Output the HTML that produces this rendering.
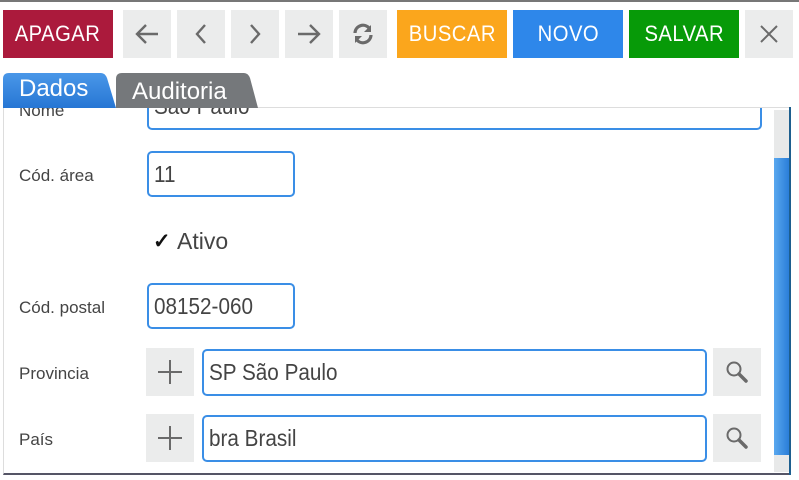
<!DOCTYPE html>
<html><head><meta charset="utf-8">
<style>
*{box-sizing:border-box;margin:0;padding:0}
body{width:799px;height:480px;overflow:hidden;background:#fff;font-family:"Liberation Sans",sans-serif;position:relative}
.a{position:absolute}
.topline{left:0;top:0;width:799px;height:2px;background:#777}
.btn{position:absolute;top:10px;height:48px;color:#fff;font-size:22px;display:flex;align-items:center;justify-content:center;letter-spacing:0.5px;font-weight:normal}
.btn span{display:inline-block;transform:scaleX(0.92)}
.g{background:#ebecec;width:48px}
.tab{position:absolute;top:73px;height:35px;color:#fff;font-size:24px;padding-left:16px;padding-top:5px}
.lbl{position:absolute;left:19px;color:#444;font-size:17px}
.inp{position:absolute;border:2px solid #3a8ee6;border-radius:5px;background:#fff;font-size:23px;color:#444;padding-left:5px;display:flex;align-items:center}
.inp span{display:inline-block;transform:scaleX(0.9);transform-origin:left}
.sq{position:absolute;width:48px;height:48px;background:#ebecec;display:flex;align-items:center;justify-content:center}
</style></head><body>
<div class="a topline"></div>

<div class="btn" style="left:3px;width:110px;background:#ab1a3c"><span>APAGAR</span></div>
<div class="btn g" style="left:123px"><svg width="26" height="22" viewBox="0 0 26 22"><path d="M24 11H3M12 2L3 11L12 20" fill="none" stroke="#6a6a6a" stroke-width="2.4"/></svg></div>
<div class="btn g" style="left:177px"><svg width="14" height="22" viewBox="0 0 14 22"><path d="M11 2L3 11L11 20" fill="none" stroke="#6a6a6a" stroke-width="2.4"/></svg></div>
<div class="btn g" style="left:231px"><svg width="14" height="22" viewBox="0 0 14 22"><path d="M3 2L11 11L3 20" fill="none" stroke="#6a6a6a" stroke-width="2.4"/></svg></div>
<div class="btn g" style="left:285px"><svg width="26" height="22" viewBox="0 0 26 22"><path d="M2 11H23M14 2L23 11L14 20" fill="none" stroke="#6a6a6a" stroke-width="2.4"/></svg></div>
<div class="btn g" style="left:339px"><svg width="24" height="24" viewBox="0 0 24 24"><path d="M4 11A8 8 0 0 1 18 6" fill="none" stroke="#6a6a6a" stroke-width="3.2"/><path d="M20 3V10H13Z" fill="#6a6a6a"/><path d="M20 13A8 8 0 0 1 6 18" fill="none" stroke="#6a6a6a" stroke-width="3.2"/><path d="M4 21V14H11Z" fill="#6a6a6a"/></svg></div>
<div class="btn" style="left:397px;width:110px;background:#fba61c"><span>BUSCAR</span></div>
<div class="btn" style="left:513px;width:110px;background:#2e87ea"><span>NOVO</span></div>
<div class="btn" style="left:629px;width:110px;background:#079a08"><span>SALVAR</span></div>
<div class="btn g" style="left:745px"><svg width="20" height="20" viewBox="0 0 20 20"><path d="M2 2L18 18M18 2L2 18" stroke="#6a6a6a" stroke-width="2"/></svg></div>

<div class="a" style="left:3px;top:107px;width:788px;height:368px;border-top:1px solid #ddd;border-left:1px solid #ddd;border-bottom:2px solid #556;overflow:hidden"></div>
<div class="a" style="left:789px;top:107px;width:2px;height:368px;background:#1d5f8f"></div>

<svg class="a" style="left:116px;top:73px" width="142" height="35"><path d="M0 35V6Q0 0 6 0H128Q132 0 134 5L142 35Z" fill="#75787b"/></svg>
<div class="tab" style="left:116px">Auditoria</div>
<svg class="a" style="left:3px;top:73px" width="113" height="35"><defs><linearGradient id="tg" x1="0" y1="0" x2="0" y2="1"><stop offset="0" stop-color="#4a97e8"/><stop offset="1" stop-color="#2676d4"/></linearGradient></defs><path d="M0 35V6Q0 0 6 0H98Q102 0 104 5L113 35Z" fill="url(#tg)"/></svg>
<div class="tab" style="left:3px;padding-top:2px">Dados</div>

<div class="a" style="left:4px;top:108px;width:770px;height:24px;overflow:hidden">
  <div class="lbl" style="left:15px;top:-7px">Nome</div>
  <div class="inp" style="left:143px;top:-26px;width:615px;height:48px"><span>São Paulo</span></div>
</div>

<div class="lbl" style="top:166px">Cód. área</div>
<div class="inp" style="left:147px;top:151px;width:148px;height:46px"><span>11</span></div>

<div class="a" style="left:153px;top:229px;font-size:21px;color:#111;font-weight:bold">✓</div>
<div class="a" style="left:177px;top:228px;font-size:23px;color:#444">Ativo</div>

<div class="lbl" style="top:298px">Cód. postal</div>
<div class="inp" style="left:147px;top:283px;width:148px;height:46px"><span>08152-060</span></div>

<div class="lbl" style="top:364px">Provincia</div>
<div class="sq" style="left:146px;top:348px"><svg width="26" height="26"><path d="M13 1V25M1 13H25" stroke="#6a6a6a" stroke-width="2"/></svg></div>
<div class="inp" style="left:202px;top:349px;width:505px;height:47px"><span>SP São Paulo</span></div>
<div class="sq" style="left:713px;top:348px"><svg width="24" height="24"><circle cx="9" cy="9" r="6.5" fill="none" stroke="#6a6a6a" stroke-width="2"/><path d="M14 14L21 21" stroke="#6a6a6a" stroke-width="3.5" stroke-linecap="round"/></svg></div>

<div class="lbl" style="top:430px">País</div>
<div class="sq" style="left:146px;top:414px"><svg width="26" height="26"><path d="M13 1V25M1 13H25" stroke="#6a6a6a" stroke-width="2"/></svg></div>
<div class="inp" style="left:202px;top:415px;width:505px;height:47px"><span>bra Brasil</span></div>
<div class="sq" style="left:713px;top:414px"><svg width="24" height="24"><circle cx="9" cy="9" r="6.5" fill="none" stroke="#6a6a6a" stroke-width="2"/><path d="M14 14L21 21" stroke="#6a6a6a" stroke-width="3.5" stroke-linecap="round"/></svg></div>

<div class="a" style="left:774px;top:110px;width:15px;height:362px;background:#e8e9e9"></div>
<div class="a" style="left:774px;top:158px;width:15px;height:297px;background:linear-gradient(90deg,#5aa8ef,#2a7ed9)"></div>
</body></html>
